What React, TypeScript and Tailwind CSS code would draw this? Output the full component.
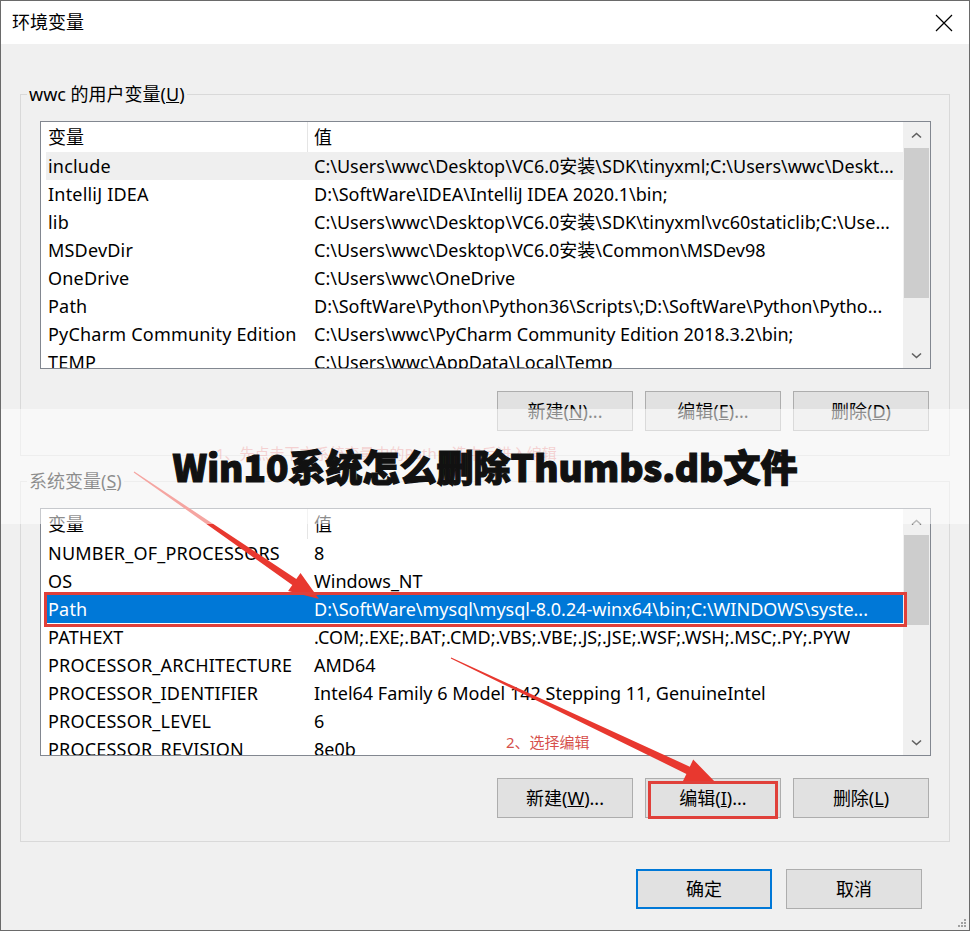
import React from 'react';

type Row = { name: string; value: string };

const userVars: Row[] = [
  { name: 'include', value: 'C:\\Users\\wwc\\Desktop\\VC6.0安装\\SDK\\tinyxml;C:\\Users\\wwc\\Deskt...' },
  { name: 'IntelliJ IDEA', value: 'D:\\SoftWare\\IDEA\\IntelliJ IDEA 2020.1\\bin;' },
  { name: 'lib', value: 'C:\\Users\\wwc\\Desktop\\VC6.0安装\\SDK\\tinyxml\\vc60staticlib;C:\\Use...' },
  { name: 'MSDevDir', value: 'C:\\Users\\wwc\\Desktop\\VC6.0安装\\Common\\MSDev98' },
  { name: 'OneDrive', value: 'C:\\Users\\wwc\\OneDrive' },
  { name: 'Path', value: 'D:\\SoftWare\\Python\\Python36\\Scripts\\;D:\\SoftWare\\Python\\Pytho...' },
  { name: 'PyCharm Community Edition', value: 'C:\\Users\\wwc\\PyCharm Community Edition 2018.3.2\\bin;' },
  { name: 'TEMP', value: 'C:\\Users\\wwc\\AppData\\Local\\Temp' },
];

const sysVars: Row[] = [
  { name: 'NUMBER_OF_PROCESSORS', value: '8' },
  { name: 'OS', value: 'Windows_NT' },
  { name: 'Path', value: 'D:\\SoftWare\\mysql\\mysql-8.0.24-winx64\\bin;C:\\WINDOWS\\syste...' },
  { name: 'PATHEXT', value: '.COM;.EXE;.BAT;.CMD;.VBS;.VBE;.JS;.JSE;.WSF;.WSH;.MSC;.PY;.PYW' },
  { name: 'PROCESSOR_ARCHITECTURE', value: 'AMD64' },
  { name: 'PROCESSOR_IDENTIFIER', value: 'Intel64 Family 6 Model 142 Stepping 11, GenuineIntel' },
  { name: 'PROCESSOR_LEVEL', value: '6' },
  { name: 'PROCESSOR_REVISION', value: '8e0b' },
];

function Chevron({ down }: { down?: boolean }) {
  return (
    <svg width="11" height="7" viewBox="0 0 11 7">
      <path
        d={down ? 'M1 1.5L5.5 5.5L10 1.5' : 'M1 5.5L5.5 1.5L10 5.5'}
        fill="none"
        stroke="#606060"
        strokeWidth="1.6"
      />
    </svg>
  );
}

function Scrollbar({ thumb }: { thumb: string }) {
  return (
    <div className="flex w-[27px] shrink-0 flex-col bg-[#f0f0f0]">
      <div className="flex h-[26px] items-center justify-center">
        <Chevron />
      </div>
      <div className={`mx-[1px] bg-[#cdcdcd] ${thumb}`} />
      <div className="flex-1" />
      <div className="flex h-[26px] items-center justify-center">
        <Chevron down />
      </div>
    </div>
  );
}

function ListView({
  rows,
  hover,
  selected,
  thumb,
}: {
  rows: Row[];
  hover?: number;
  selected?: number;
  thumb: string;
}) {
  return (
    <div className="flex h-[248px] w-[891px] border border-[#828790] bg-white">
      <div className="min-w-0 flex-1 overflow-hidden">
        <div className="flex h-[30px] leading-[30px]">
          <div className="w-[267px] shrink-0 border-r border-[#e5e5e5] pl-[7px]">变量</div>
          <div className="pl-[6px]">值</div>
        </div>
        {rows.map((r, i) => (
          <div
            key={r.name}
            className={`ml-[5px] flex h-[28px] whitespace-nowrap leading-[28px] ${
              i === selected ? 'bg-[#0078d7] text-white' : i === hover ? 'bg-[#efefef]' : ''
            }`}
          >
            <div className="w-[261px] shrink-0 pl-[2px] tracking-[0.2px]">{r.name}</div>
            <div className="overflow-hidden pl-[7px]">{r.value}</div>
          </div>
        ))}
      </div>
      <Scrollbar thumb={thumb} />
    </div>
  );
}

function Btn({ children, blue }: { children: React.ReactNode; blue?: boolean }) {
  return (
    <div
      className={`flex h-[40px] w-[136px] items-center justify-center bg-[#e1e1e1] ${
        blue ? 'border-2 border-[#0078d7]' : 'border border-[#adadad]'
      }`}
    >
      {children}
    </div>
  );
}

export default function App() {
  return (
    <div className="relative h-[931px] w-[970px] overflow-hidden border border-[#6a6a6a] bg-[#f0f0f0] font-['Noto_Sans','Noto_Sans_CJK_SC',sans-serif] text-[18px] text-black">
      {/* title bar */}
      <div className="flex h-[43px] items-center justify-between bg-white pl-[11px] pr-[16px]">
        <span>环境变量</span>
        <svg width="18" height="18" viewBox="0 0 18 18">
          <path d="M1 1L17 17M17 1L1 17" stroke="#000" strokeWidth="1.2" />
        </svg>
      </div>

      {/* user variables */}
      <div className="relative ml-[19px] mt-[50px] w-[930px] border border-[#d9d9d9] pb-[24px] pl-[19px] pt-[26px]">
        <span className="absolute -top-[14px] left-[6px] bg-[#f0f0f0] px-[2px] leading-[26px]">
          wwc 的用户变量(<u>U</u>)
        </span>
        <ListView rows={userVars} hover={0} thumb="h-[150px]" />
        <div className="mt-[22px] flex w-[889px] justify-end gap-[12px]">
          <Btn>
            新建(<u>N</u>)...
          </Btn>
          <Btn>
            编辑(<u>E</u>)...
          </Btn>
          <Btn>
            删除(<u>D</u>)
          </Btn>
        </div>
      </div>

      {/* system variables */}
      <div className="relative ml-[19px] mt-[25px] w-[930px] border border-[#d9d9d9] pb-[23px] pl-[19px] pt-[26px]">
        <span className="absolute -top-[14px] left-[6px] bg-[#f0f0f0] px-[2px] leading-[26px]">
          系统变量(<u>S</u>)
        </span>
        <ListView rows={sysVars} selected={2} thumb="h-[90px]" />
        <div className="mt-[22px] flex w-[889px] justify-end gap-[12px]">
          <Btn>
            新建(<u>W</u>)...
          </Btn>
          <Btn>
            编辑(<u>I</u>)...
          </Btn>
          <Btn>
            删除(<u>L</u>)
          </Btn>
        </div>
      </div>

      <div className="mt-[27px] flex justify-end gap-[14px] pr-[47px]">
        <Btn blue>确定</Btn>
        <Btn>取消</Btn>
      </div>

      {/* resize grip */}
      <svg className="absolute bottom-[2px] right-[2px]" width="10" height="10" viewBox="0 0 10 10">
        <g fill="#a0a0a0">
          <rect x="7" y="1" width="2" height="2" />
          <rect x="4" y="4" width="2" height="2" />
          <rect x="7" y="4" width="2" height="2" />
          <rect x="1" y="7" width="2" height="2" />
          <rect x="4" y="7" width="2" height="2" />
          <rect x="7" y="7" width="2" height="2" />
        </g>
      </svg>

      {/* annotations */}
      <span className="absolute left-[215px] top-[442px] text-[15px] leading-[20px] text-[#e06060] opacity-60">
        1、先点击下方系统变量中的Path，选中后进入编辑
      </span>
      <span className="absolute left-[505px] top-[731px] text-[15px] leading-[20px] text-[#d6504c]">
        2、选择编辑
      </span>
      <svg className="pointer-events-none absolute left-0 top-0" width="970" height="931" viewBox="0 0 970 931">
        <polygon
          fill="#e8382f"
          points="132.7,471.4 291.3,583.9 287.1,590.1 318,598 299.5,571.9 295.3,578.1 133.3,470.6"
        />
        <polygon
          fill="#e8382f"
          points="449.8,657.5 685.4,772.9 682,780.1 716,783 692.2,758.5 688.8,765.7 450.2,656.5"
        />
        <rect x="44.5" y="592.5" width="860" height="32" fill="none" stroke="#e0403a" strokeWidth="3" />
        <rect x="648.5" y="781.5" width="127" height="35" fill="none" stroke="#e0403a" strokeWidth="3" />
      </svg>

      {/* title band */}
      <div className="absolute left-0 right-0 top-[408px] flex h-[115px] items-center justify-center bg-white/55">
        <span className="font-['Noto_Sans_CJK_SC',sans-serif] text-[37px] font-black leading-none text-[#111] [-webkit-text-stroke:1.2px_#111]">
          Win10系统怎么删除Thumbs.db文件
        </span>
      </div>
    </div>
  );
}
